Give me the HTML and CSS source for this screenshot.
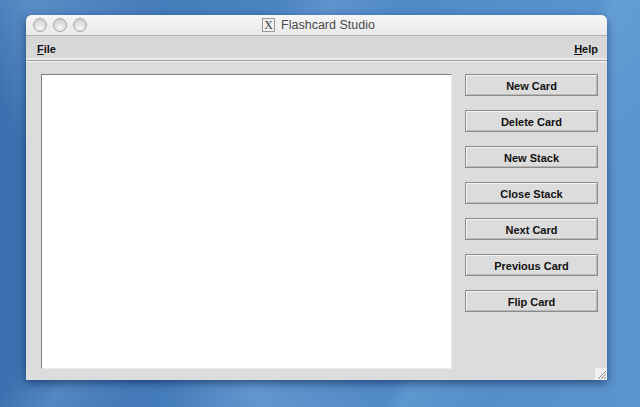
FILE: index.html
```html
<!DOCTYPE html>
<html>
<head>
<meta charset="utf-8">
<title>Flashcard Studio</title>
<link rel="stylesheet" href="styles.css">
</head>
<body>
<div class="desktop">
  <div class="window">
    <div class="titlebar">
      <div class="lights">
        <span class="light"></span><span class="light"></span><span class="light"></span>
      </div>
      <div class="title"><span class="xicon">X</span><span class="title-text">Flashcard Studio</span></div>
    </div>
    <div class="menubar">
      <span class="menu"><u>F</u>ile</span>
      <span class="menu"><u>H</u>elp</span>
    </div>
    <div class="content">
      <div class="cardarea"></div>
      <div class="buttons">
        <button class="btn">New Card</button>
        <button class="btn">Delete Card</button>
        <button class="btn">New Stack</button>
        <button class="btn">Close Stack</button>
        <button class="btn">Next Card</button>
        <button class="btn">Previous Card</button>
        <button class="btn">Flip Card</button>
      </div>
      <span class="grip">
        <svg width="12" height="12" viewBox="0 0 12 12"><path d="M11 3L3 11M11 6L6 11M11 9L9 11" stroke="#8a8a8a" stroke-width="1"/></svg>
      </span>
    </div>
  </div>
</div>
</body>
</html>
```
FILE: styles.css
```css
html, body {
  margin: 0;
  padding: 0;
}
body {
  width: 640px;
  height: 407px;
  overflow: hidden;
  font-family: "Liberation Sans", Arial, sans-serif;
}
.desktop {
  width: 640px;
  height: 407px;
  padding-top: 15px;
  box-sizing: border-box;
  background:
    linear-gradient(118deg, transparent 0 70%, rgba(120,175,225,0.35) 72%, transparent 82%),
    linear-gradient(60deg, transparent 0 20%, rgba(140,190,235,0.35) 30%, transparent 45%),
    linear-gradient(125deg, transparent 0 30%, rgba(130,180,230,0.3) 36%, transparent 44%),
    linear-gradient(to right, #3b70b0 0%, #4a82c0 40%, #5b95cf 100%);
}
.window {
  margin-left: 26px;
  width: 581px;
  height: 365px;
  display: flex;
  flex-direction: column;
  border-radius: 6px 6px 0 0;
  box-shadow: 0 3px 9px rgba(0, 20, 60, 0.55);
  background: #dcdcdc;
}
.titlebar {
  height: 20px;
  position: relative;
  display: flex;
  align-items: center;
  justify-content: center;
  background: linear-gradient(to bottom, #f6f6f6, #e9e9e9);
  border-radius: 6px 6px 0 0;
  border-bottom: 1px solid #b4b4b4;
}
.lights {
  position: absolute;
  left: 7px;
  top: 3px;
  display: flex;
  gap: 6px;
}
.light {
  width: 12px;
  height: 12px;
  border-radius: 50%;
  border: 1px solid #a8a8a8;
  background: radial-gradient(circle at 50% 75%, #f8f8f8 0, #dcdcdc 55%, #c2c2c2 100%);
}
.title {
  display: flex;
  align-items: center;
  gap: 6px;
  margin-left: 4px;
}
.xicon {
  width: 11px;
  height: 12px;
  border: 1px solid #9a9a9a;
  background: #f0f0f0;
  font-family: "Liberation Serif", serif;
  font-size: 12px;
  line-height: 12px;
  text-align: center;
  color: #444;
}
.title-text {
  font-size: 12.5px;
  color: #4a4a4a;
}
.menubar {
  height: 26px;
  display: flex;
  align-items: center;
  justify-content: space-between;
  padding: 2px 9px 0 11px;
  box-sizing: border-box;
  background: linear-gradient(to bottom, #d6d6d6, #dadada);
  border-bottom: 1px solid #a0a0a0;
  box-shadow: inset 0 -2px 0 #ececec;
}
.menu {
  font-size: 11px;
  font-weight: bold;
  color: #111;
}
.content {
  flex: 1;
  position: relative;
  display: flex;
  padding: 12px 9px 11px 15px;
  gap: 13px;
  background: #dcdcdc;
  border-top: 1px solid #f4f4f4;
}
.cardarea {
  width: 409px;
  height: 293px;
  background: #fff;
  border-top: 1px solid #808080;
  border-left: 1px solid #808080;
  border-right: 1px solid #ececec;
  border-bottom: 1px solid #ececec;
}
.buttons {
  display: flex;
  flex-direction: column;
  gap: 14px;
}
.btn {
  width: 133px;
  height: 22px;
  margin: 0;
  padding: 1px 0 0;
  font-family: "Liberation Sans", Arial, sans-serif;
  font-size: 11px;
  font-weight: bold;
  color: #111;
  background: #dcdcdc;
  border: 1px solid #8c8c8c;
  box-shadow: inset 1px 1px 0 #f6f6f6, inset -1px -1px 0 #b8b8b8;
}
.grip {
  position: absolute;
  right: 0;
  bottom: 0;
  width: 12px;
  height: 12px;
  background: #f2f2f2;
  display: block;
}
.grip svg {
  display: block;
}
```
